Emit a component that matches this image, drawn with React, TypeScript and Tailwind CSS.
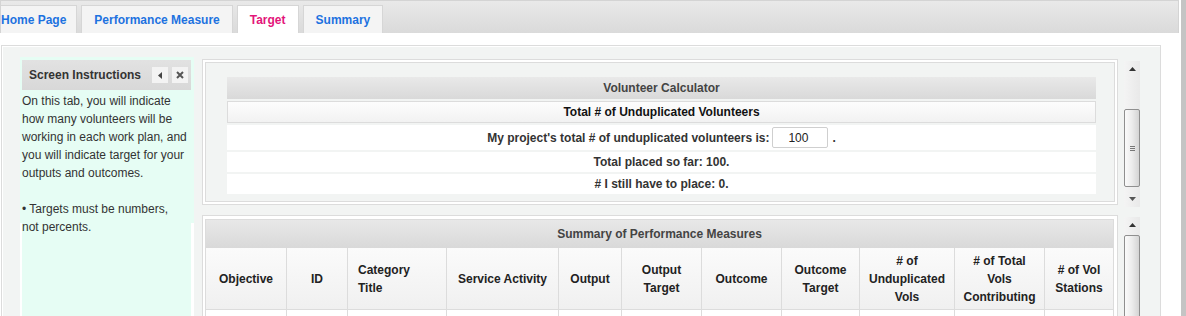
import React from "react";

function Tab({ label, active, first }: { label: string; active?: boolean; first?: boolean }) {
  return (
    <div
      className={
        "h-[28px] flex items-center border border-b-0 border-[#d6d6d6] font-bold whitespace-nowrap " +
        (first ? "pl-[12px] pr-[10px] " : "px-[12px] ") +
        (active ? "bg-white text-[#e3157a]" : "bg-[#f4f4f4] text-[#1d72e0]")
      }
    >
      {label}
    </div>
  );
}

function UpArrow() {
  return (
    <svg width="7" height="4" viewBox="0 0 7 4">
      <path d="M0 4 L3.5 0 L7 4 Z" fill="#333" />
    </svg>
  );
}
function DownArrow() {
  return (
    <svg width="7" height="4" viewBox="0 0 7 4">
      <path d="M0 0 L3.5 4 L7 0 Z" fill="#555" />
    </svg>
  );
}

function Thumb({ h, grip }: { h: string; grip?: boolean }) {
  return (
    <div
      className={
        "w-[16px] border border-[#8f8f8f] rounded-[2px] bg-gradient-to-r from-[#fbfbfb] via-[#ececec] to-[#d4d4d4] flex items-center justify-center " +
        h
      }
    >
      {grip && (
        <div className="flex flex-col gap-[1px]">
          <div className="w-[5px] h-[1px] bg-[#777]" />
          <div className="w-[5px] h-[1px] bg-[#777]" />
          <div className="w-[5px] h-[1px] bg-[#777]" />
        </div>
      )}
    </div>
  );
}

const cols = [
  { w: "w-[81px]", label: ["Objective"] },
  { w: "w-[61px]", label: ["ID"] },
  { w: "w-[99px]", label: ["Category", "Title"], left: true },
  { w: "w-[112px]", label: ["Service Activity"] },
  { w: "w-[63px]", label: ["Output"] },
  { w: "w-[80px]", label: ["Output", "Target"] },
  { w: "w-[80px]", label: ["Outcome"] },
  { w: "w-[78px]", label: ["Outcome", "Target"] },
  { w: "w-[95px]", label: ["# of", "Unduplicated", "Vols"] },
  { w: "w-[90px]", label: ["# of Total", "Vols", "Contributing"] },
  { w: "w-[68px]", label: ["# of Vol", "Stations"], last: true },
];

export default function App() {
  return (
    <div className="flex h-[316px] w-[1186px] overflow-hidden bg-white font-['Liberation_Sans',Arial,sans-serif] text-[12px] leading-[18px]">
      <div className="w-[1181px] flex flex-col">
        {/* Tab bar */}
        <div className="h-[33px] w-[1179px] shrink-0 flex items-end border border-b-0 border-[#d4d4d4] bg-gradient-to-b from-[#e9e9e9] to-[#dadada] overflow-hidden">
          <div className="flex gap-[4px] ml-[-13px]">
            <Tab label="Home Page" first />
            <Tab label="Performance Measure" />
            <Tab label="Target" active />
            <Tab label="Summary" />
          </div>
        </div>

        {/* Outer container */}
        <div className="mt-[12px] ml-[1px] w-[1160px] flex-1 border border-b-0 border-[#dcdcdc] bg-[#f2f4f3] shadow-[inset_1px_1px_0_#fff] flex pl-[18px] pt-[11px]">
          {/* Left instructions */}
          <div className="w-[174px] block">
            <div className="h-[166px] bg-[#e6fdf4] pl-[2px] pr-[3px] pt-[3px]">
              <div className="h-[30px] bg-gradient-to-b from-[#e2e2e2] to-[#d8d8d8] flex items-center pl-[7px] pr-[3px]">
                <span className="font-bold text-[#333] flex-1">Screen Instructions</span>
                <div className="flex gap-[4px]">
                  <div className="w-[16px] h-[16px] bg-[#f3f3f3] flex items-center justify-center">
                    <svg width="4" height="7" viewBox="0 0 4 7">
                      <path d="M4 0 L0 3.5 L4 7 Z" fill="#444" />
                    </svg>
                  </div>
                  <div className="w-[16px] h-[16px] bg-[#f3f3f3] flex items-center justify-center">
                    <svg width="8" height="8" viewBox="0 0 8 8">
                      <path d="M1 1 L7 7 M7 1 L1 7" stroke="#555" strokeWidth="2" />
                    </svg>
                  </div>
                </div>
              </div>
              <div className="pt-[2px] text-[#333]">
                <div>On this tab, you will indicate</div>
                <div>how many volunteers will be</div>
                <div>working in each work plan, and</div>
                <div>you will indicate target for your</div>
                <div>outputs and outcomes.</div>
                <div>&nbsp;</div>
                <div>• Targets must be numbers,</div>
                <div>not percents.</div>
              </div>
            </div>
            <div className="h-[120px] bg-[#e6fdf4] border-l-2 border-r-[3px] border-white" />
          </div>

          {/* Right column */}
          <div className="ml-[8px] mt-[2px] flex flex-col">
            {/* Panel 1 */}
            <div className="flex h-[150px]">
              <div className="w-[916px] h-[146px] border border-[#dcdcdc] bg-white p-[2px]">
                <div className="h-full border border-[#dcdcdc] bg-[#f2f4f3] pl-[21px] pt-[14px]">
                  <div className="w-[869px] flex flex-col gap-[2px] font-bold">
                    <div className="h-[22px] bg-gradient-to-b from-[#e9e9e9] to-[#d9d9d9] flex items-center justify-center text-[#444]">
                      Volunteer Calculator
                    </div>
                    <div className="h-[22px] border border-[#dcdcdc] bg-gradient-to-b from-[#fdfdfd] to-[#f2f2f2] flex items-center justify-center text-[#111]">
                      Total # of Unduplicated Volunteers
                    </div>
                    <div className="h-[25px] bg-white flex items-center justify-center text-[#333]">
                      <span>My project's total # of unduplicated volunteers is:</span>
                      <div className="ml-[3px] w-[56px] h-[21px] border border-[#cfcfcf] rounded-[2px] bg-white flex items-center justify-center font-normal text-[#222] pr-[4px]">
                        100
                      </div>
                      <span className="ml-[4px]">.</span>
                    </div>
                    <div className="h-[20px] bg-white flex items-center justify-center text-[#333]">
                      Total placed so far: 100.
                    </div>
                    <div className="h-[20px] bg-white flex items-center justify-center text-[#333]">
                      # I still have to place: 0.
                    </div>
                  </div>
                </div>
              </div>
              {/* Scrollbar 1 */}
              <div className="ml-[6px] mt-[2px] w-[16px] h-[146px] bg-gradient-to-r from-[#f4f4f4] to-[#e9e9e9] flex flex-col">
                <div className="h-[16px] flex items-center justify-center">
                  <UpArrow />
                </div>
                <div className="flex-1 pt-[32px]">
                  <Thumb h="h-[78px]" grip />
                </div>
                <div className="h-[16px] flex items-center justify-center">
                  <DownArrow />
                </div>
              </div>
            </div>

            {/* Panel 2 */}
            <div className="flex mt-[6px] flex-1">
              <div className="w-[916px] border border-b-0 border-[#dcdcdc] bg-white pt-[3px] pl-[2px]">
                <div className="w-[909px] border border-b-0 border-[#dcdcdc] font-bold">
                  <div className="h-[28px] bg-gradient-to-b from-[#e8e8e8] to-[#d9d9d9] flex items-center justify-center text-[#444]">
                    Summary of Performance Measures
                  </div>
                  <div className="flex">
                    {cols.map((c, i) => (
                      <div
                        key={i}
                        className={
                          "h-[62px] border-b border-[#dcdcdc] bg-gradient-to-b from-[#fbfbfb] to-[#f0f0f0] flex flex-col justify-center text-[#222] " +
                          c.w +
                          (c.last ? "" : " border-r") +
                          (c.left ? " items-start pl-[10px]" : " items-center text-center")
                        }
                      >
                        {c.label.map((l, j) => (
                          <div key={j} className="whitespace-nowrap">
                            {l}
                          </div>
                        ))}
                      </div>
                    ))}
                  </div>
                  <div className="flex">
                    {cols.map((c, i) => (
                      <div
                        key={i}
                        className={"h-[30px] bg-white border-[#dcdcdc] " + c.w + (c.last ? "" : " border-r")}
                      />
                    ))}
                  </div>
                </div>
              </div>
              {/* Scrollbar 2 */}
              <div className="ml-[6px] mt-[2px] w-[16px] bg-gradient-to-r from-[#f4f4f4] to-[#e9e9e9] flex flex-col">
                <div className="h-[16px] flex items-center justify-center">
                  <UpArrow />
                </div>
                <div className="flex-1 pt-[2px]">
                  <Thumb h="h-[120px]" />
                </div>
              </div>
            </div>
          </div>
        </div>
      </div>
      <div className="w-[5px] h-full bg-[#c4c4c4]" />
    </div>
  );
}
